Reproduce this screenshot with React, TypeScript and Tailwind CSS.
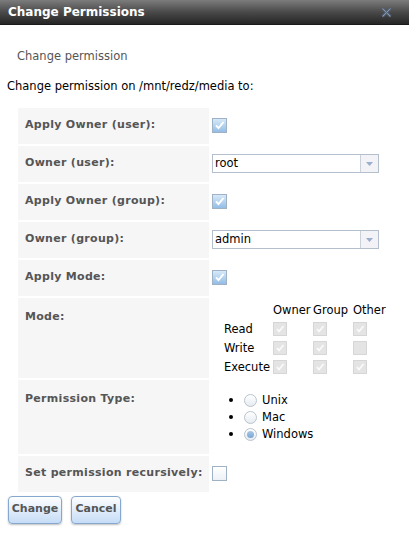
import React from "react";

const font = { fontFamily: '"DejaVu Sans", Verdana, sans-serif' };

function Check({ on = false, disabled = false }: { on?: boolean; disabled?: boolean }) {
  if (disabled) {
    return (
      <span className="inline-flex h-[14px] w-[14px] items-center justify-center border border-[#d6d6d6] bg-[#e4e4e4]">
        {on && (
          <svg width="10" height="10" viewBox="0 0 10 10">
            <path d="M2 5 L4 7.5 L8.5 2" fill="none" stroke="#fbfbfb" strokeWidth="1.7" />
          </svg>
        )}
      </span>
    );
  }
  return (
    <span
      className={
        "inline-flex h-[15px] w-[15px] items-center justify-center border border-[#9fb1c4] " +
        (on ? "bg-gradient-to-b from-[#d8e9f8] to-[#93bde6]" : "bg-gradient-to-b from-[#ffffff] to-[#edf1f6]")
      }
    >
      {on && (
        <svg width="11" height="11" viewBox="0 0 11 11">
          <path d="M2 5.5 L4.5 8 L9.5 2" fill="none" stroke="#ffffff" strokeWidth="1.9" />
        </svg>
      )}
    </span>
  );
}

function Select({ value }: { value: string }) {
  return (
    <div className="flex h-[19px] w-[167px] border border-[#b3bfcc] bg-white">
      <div className="flex-1 pl-[2px] text-[11.5px] leading-[17px] text-black">{value}</div>
      <div className="flex w-[18px] items-center justify-center border-l border-[#c9d1db] bg-[#f3f2f6]">
        <svg width="7" height="4" viewBox="0 0 7 4">
          <path d="M0 0 H7 L3.5 4 Z" fill="#9aaed0" />
        </svg>
      </div>
    </div>
  );
}

function Radio({ on = false }: { on?: boolean }) {
  return (
    <span className="inline-flex h-[13px] w-[13px] items-center justify-center rounded-full border border-[#b9c3cd] bg-gradient-to-b from-[#ffffff] to-[#e6ecf2]">
      {on && <span className="h-[7px] w-[7px] rounded-full bg-gradient-to-b from-[#a8c8e8] to-[#7aa6d2]" />}
    </span>
  );
}

function Row({ label, h = "h-[36px]", top = false, children }: { label: string; h?: string; top?: boolean; children: React.ReactNode }) {
  return (
    <div className="flex gap-[2px]">
      <div className={`flex w-[191px] shrink-0 bg-[#f6f6f6] pl-[7px] ${h} ${top ? "items-start pt-[11px]" : "items-center"}`}>
        <span className="whitespace-nowrap text-[11px] font-bold tracking-[0.3px] text-[#555]">{label}</span>
      </div>
      <div className="flex min-w-0 flex-1 items-center pl-[1px]">{children}</div>
    </div>
  );
}

export default function App() {
  const perms: [string, boolean[]][] = [
    ["Read", [true, true, true]],
    ["Write", [true, true, false]],
    ["Execute", [true, true, true]],
  ];
  return (
    <div className="h-[535px] w-[409px] bg-white" style={font}>
      <div className="flex h-[25px] items-center justify-between border-b border-[#1a1a1a] bg-gradient-to-b from-[#7c7c7c] via-[#4a4a4a] to-[#262626] px-[8px]">
        <span className="text-[12px] font-bold text-white">Change Permissions</span>
        <svg width="11" height="11" viewBox="0 0 11 11" className="mr-[9px]">
          <path d="M1.5 1.5 L9.5 9.5 M9.5 1.5 L1.5 9.5" stroke="#56647a" strokeWidth="2.8" />
          <path d="M1.5 1.5 L9.5 9.5 M9.5 1.5 L1.5 9.5" stroke="#8595aa" strokeWidth="1" />
        </svg>
      </div>

      <div className="pl-[17px] pt-[23px] text-[11.5px] text-[#555]">Change permission</div>
      <div className="pl-[7px] pt-[13px] text-[11.5px] text-black">Change permission on /mnt/redz/media to:</div>

      <div className="ml-[18px] mt-[12px] flex w-[370px] flex-col gap-[2px]">
        <Row label="Apply Owner (user):">
          <Check on />
        </Row>
        <Row label="Owner (user):">
          <Select value="root" />
        </Row>
        <Row label="Apply Owner (group):">
          <Check on />
        </Row>
        <Row label="Owner (group):">
          <Select value="admin" />
        </Row>
        <Row label="Apply Mode:">
          <Check on />
        </Row>
        <Row label="Mode:" h="h-[80px]" top>
          <div className="grid grid-cols-[49px_40px_40px_40px] items-center gap-y-[5px] self-start pl-[12px] pt-[5px] text-[11.5px] leading-[14px] text-black">
            <span />
            <span>Owner</span>
            <span>Group</span>
            <span>Other</span>
            {perms.map(([name, vals]) => (
              <React.Fragment key={name}>
                <span className="whitespace-nowrap">{name}</span>
                {vals.map((v, i) => (
                  <span key={i} className="flex">
                    <Check on={v} disabled />
                  </span>
                ))}
              </React.Fragment>
            ))}
          </div>
        </Row>
        <Row label="Permission Type:" h="h-[74px]" top>
          <ul className="flex flex-col gap-[4px] self-start pl-[17px] pt-[14px] text-[11.5px] text-black">
            {["Unix", "Mac", "Windows"].map((t) => (
              <li key={t} className="flex items-center">
                <span className="mr-[11px] h-[4px] w-[4px] rounded-full bg-black" />
                <Radio on={t === "Windows"} />
                <span className="ml-[5px] leading-[13px]">{t}</span>
              </li>
            ))}
          </ul>
        </Row>
        <Row label="Set permission recursively:">
          <Check />
        </Row>
      </div>

      <div className="ml-[8px] mt-[4px] flex gap-[9px]">
        {[
          ["Change", "w-[54px]"],
          ["Cancel", "w-[50px]"],
        ].map(([b, w]) => (
          <button
            key={b}
            className={`h-[28px] ${w} rounded-[4px] border border-[#86a8cf] bg-gradient-to-b from-[#fdfeff] to-[#c6dcf6] text-[11px] font-bold text-[#555] shadow-[0_1px_2px_rgba(0,0,0,0.25)]`}
          >
            {b}
          </button>
        ))}
      </div>
    </div>
  );
}
